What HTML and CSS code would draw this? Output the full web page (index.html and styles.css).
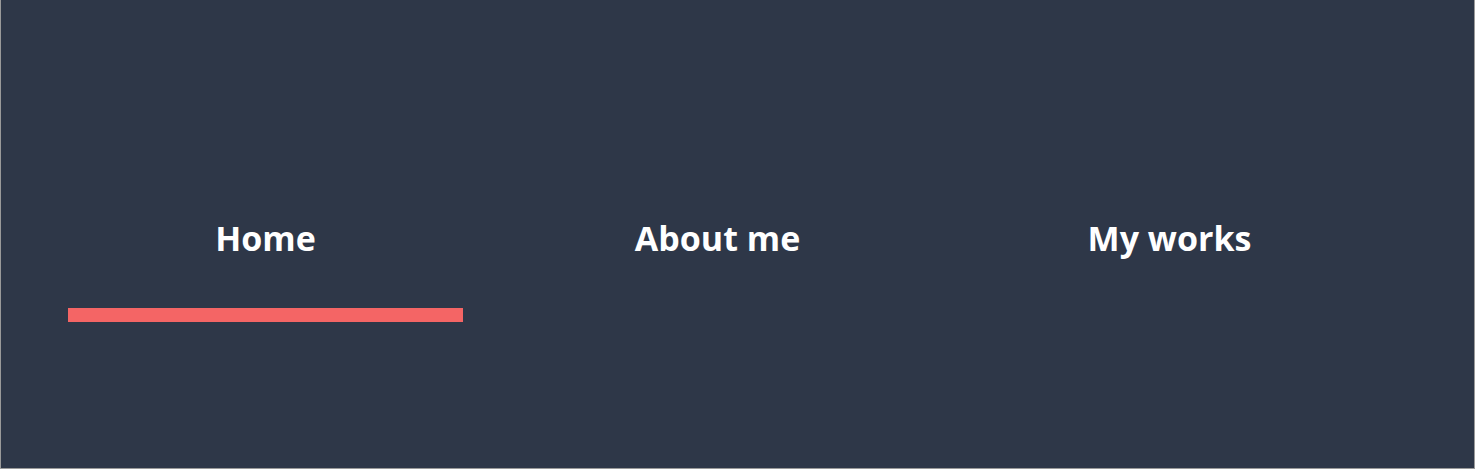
FILE: index.html
```html
<!DOCTYPE html>
<html lang="en">
<head>
<meta charset="utf-8">
<title>Nav</title>
<link rel="stylesheet" href="styles.css">
</head>
<body>
<div class="frame">
  <nav class="nav">
    <ul class="nav-list">
      <li class="nav-item active"><a class="nav-link" href="#">Home</a><span class="indicator"></span></li>
      <li class="nav-item"><a class="nav-link" href="#">About me</a></li>
      <li class="nav-item"><a class="nav-link" href="#">My works</a></li>
    </ul>
  </nav>
</div>
</body>
</html>
```
FILE: styles.css
```css
html, body {
  margin: 0;
  padding: 0;
  height: 100%;
}
body {
  background: #2e3748;
  font-family: "Open Sans", "Noto Sans", sans-serif;
}
.frame {
  box-sizing: border-box;
  height: 469px;
  border: 1px solid #9a9a9a;
  border-top: none;
  background: #2e3748;
}
.nav {
  padding-top: 215px;
}
.nav-list {
  list-style: none;
  margin: 0;
  padding: 0 0 0 67px;
  display: flex;
  gap: 57px;
}
.nav-item {
  width: 395px;
  display: flex;
  flex-direction: column;
  align-items: center;
}
.nav-link {
  color: #ffffff;
  text-decoration: none;
  font-weight: 700;
  font-size: 34px;
  line-height: 46px;
}
.indicator {
  align-self: stretch;
  height: 14px;
  margin-top: 47px;
  background: #f46565;
}
```
